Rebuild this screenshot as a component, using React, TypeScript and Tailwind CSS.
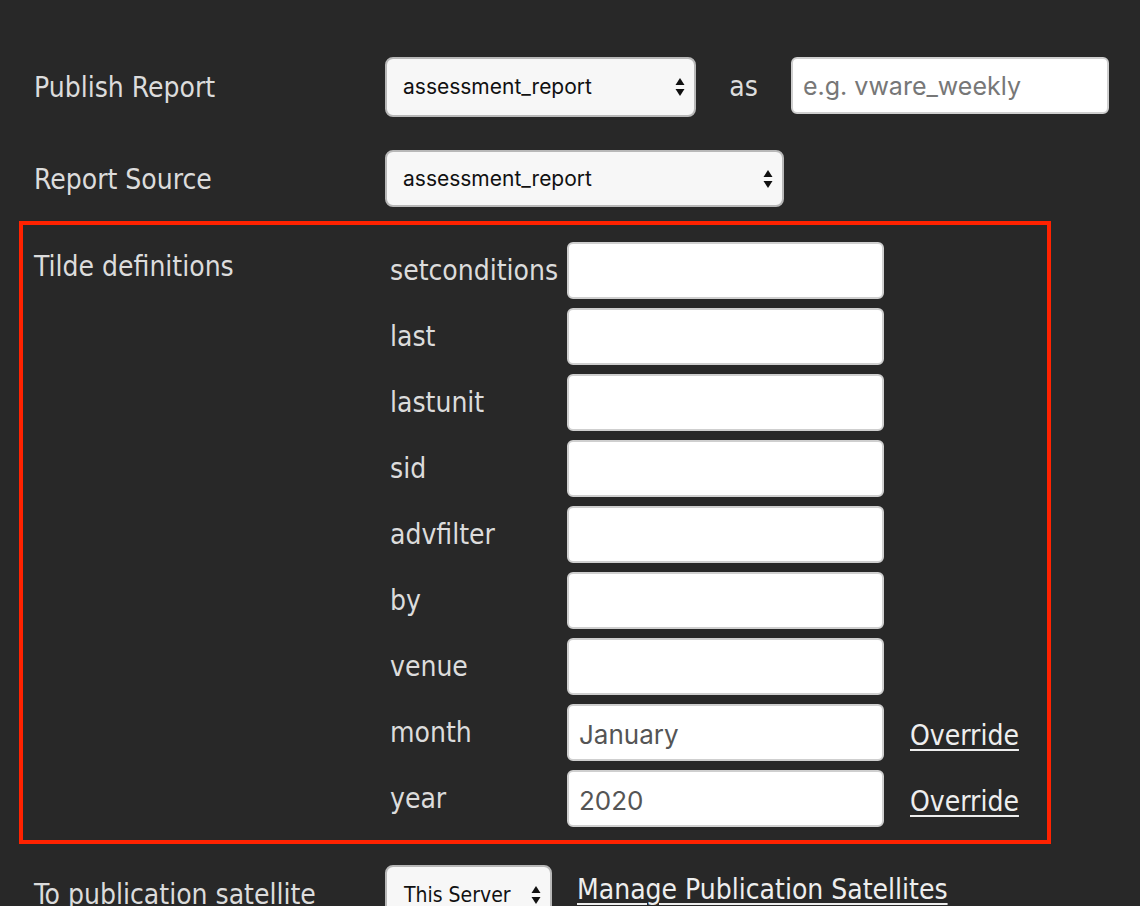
import { useState } from 'react';

const tildes = [
  { name: 'setconditions', value: '' },
  { name: 'last', value: '' },
  { name: 'lastunit', value: '' },
  { name: 'sid', value: '' },
  { name: 'advfilter', value: '' },
  { name: 'by', value: '' },
  { name: 'venue', value: '' },
  { name: 'month', value: 'January', override: true },
  { name: 'year', value: '2020', override: true },
];

function Arrows() {
  return (
    <svg width="10" height="20" viewBox="0 0 10 20" className="shrink-0">
      <path d="M5 1 L9.5 8 H0.5 Z" fill="#111" />
      <path d="M5 19 L9.5 12 H0.5 Z" fill="#111" />
    </svg>
  );
}

function Select({ value, className }: { value: string; className: string }) {
  return (
    <div
      className={`${className} flex items-center justify-between pl-[16px] pr-[9px] bg-[#f7f7f7] border-2 border-[#b8b8b8] rounded-[8px] text-[#111]`}
    >
      <span>{value}</span>
      <Arrows />
    </div>
  );
}

export default function App() {
  const [values, setValues] = useState(tildes.map((t) => t.value));

  return (
    <div className="min-h-[906px] bg-[#282828] text-[#dcdcdc] font-['DejaVu_Sans_Condensed',sans-serif] text-[28px] leading-[34px] overflow-hidden">
      <div className="pt-[57px] flex flex-col">
        {/* Publish Report */}
        <div className="flex items-center h-[60px]">
          <div className="w-[385px] pl-[34px] pt-[2px]">Publish Report</div>
          <Select
            value="assessment_report"
            className="w-[311px] h-[60px] text-[21px] font-['Inter',sans-serif]"
          />
          <div className="w-[95px] text-center text-[#ddd]">as</div>
          <input
            placeholder="e.g. vware_weekly"
            className="w-[318px] h-[57px] self-start bg-white rounded-[6px] border-2 border-[#cfcfcf] px-[10px] text-[25px] font-['Inter',sans-serif] text-[#333] placeholder:text-[#777] outline-none"
          />
        </div>

        {/* Report Source */}
        <div className="flex items-center h-[57px] mt-[33px]">
          <div className="w-[385px] pl-[34px] pt-[2px]">Report Source</div>
          <Select
            value="assessment_report"
            className="w-[399px] h-[57px] text-[21px] font-['Inter',sans-serif]"
          />
        </div>

        {/* Tilde definitions */}
        <div className="ml-[19px] mt-[14px] w-[1032px] h-[623px] border-[4px] border-[#ff2200] flex">
          <div className="w-[367px] pl-[11px] pt-[25px]">Tilde definitions</div>
          <div className="flex flex-col gap-[10px] pt-[17px]">
            {tildes.map((t, i) => (
              <div key={t.name} className="flex items-center h-[56px]">
                <div className="w-[177px] mt-[2px]">{t.name}</div>
                <input
                  value={values[i]}
                  onChange={(e) => {
                    const next = [...values];
                    next[i] = e.target.value;
                    setValues(next);
                  }}
                  className="w-[317px] h-[57px] bg-white rounded-[6px] border-2 border-[#cfcfcf] px-[10px] pt-[4px] text-[26px] font-['Inter',sans-serif] text-[#555] outline-none"
                />
                {t.override && (
                  <a
                    href="#"
                    className="ml-[26px] mt-[8px] text-[#eee] underline underline-offset-[4px] decoration-2"
                  >
                    Override
                  </a>
                )}
              </div>
            ))}
          </div>
        </div>

        {/* To publication satellite */}
        <div className="flex items-start h-[60px] mt-[21px]">
          <div className="w-[385px] pl-[34px] pt-[13px]">To publication satellite</div>
          <Select
            value="This Server"
            className="w-[167px] h-[60px] text-[21px] pl-[17px]"
          />
          <a
            href="#"
            className="ml-[25px] pt-[8px] text-[#eee] underline underline-offset-[4px] decoration-2"
          >
            Manage Publication Satellites
          </a>
        </div>
      </div>
    </div>
  );
}
